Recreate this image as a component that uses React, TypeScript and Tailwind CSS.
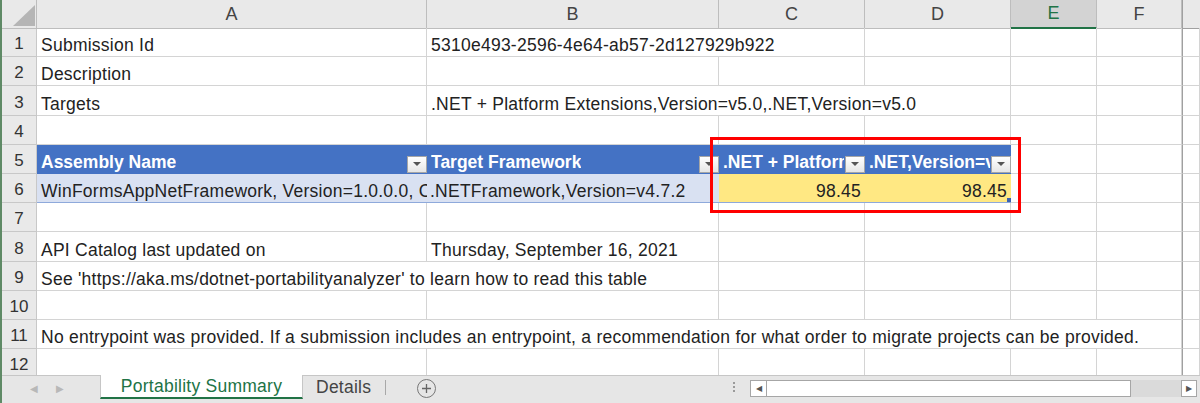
import React from 'react';

const grid = 'grid grid-cols-[35px_390px_292px_146px_146px_86px_85px_1fr]';
const line = 'border-r border-b border-[#d4d4d4]';

function RowNum({ n }: { n: number }) {
  return (
    <div className="flex items-end justify-center pb-[2px] bg-[#e9e9e9] border-r border-b border-[#c8c8c8] text-[17px] leading-[20px] text-[#333]">
      {n}
    </div>
  );
}

function Cell({ className = '', children }: { className?: string; children?: React.ReactNode }) {
  return (
    <div className={`flex items-end pb-[1px] pl-[4px] overflow-hidden whitespace-nowrap leading-[20px] tracking-[0.25px] ${line} ${className}`}>
      {children}
    </div>
  );
}

function Filter() {
  return (
    <div className="absolute right-0 bottom-0 w-[20px] h-[17px] border border-[#a6a6a6] bg-gradient-to-b from-white to-[#e6e6e6] flex items-center justify-center">
      <div className="w-0 h-0 border-l-[4px] border-r-[4px] border-t-[4px] border-l-transparent border-r-transparent border-t-[#555]" />
    </div>
  );
}

function HeadCell({ children, className = '' }: { children?: React.ReactNode; className?: string }) {
  return (
    <div className={`relative flex items-end pb-[1px] pl-[4px] pr-[21px] overflow-hidden whitespace-nowrap leading-[20px] bg-[#4472c4] text-white font-bold border-b border-[#4472c4] ${className}`}>
      <span className="min-w-0 overflow-hidden">{children}</span>
      <Filter />
    </div>
  );
}

function Empty({ n }: { n: number }) {
  return (
    <div className={`${grid} h-[29.2px]`}>
      <RowNum n={n} />
      <Cell />
      <Cell />
      <Cell />
      <Cell />
      <Cell />
      <Cell />
      <Cell className="border-l border-l-[#a0a0a0]" />
    </div>
  );
}

export default function App() {
  const letters = ['A', 'B', 'C', 'D', 'E', 'F'];
  return (
    <div className="relative w-[1200px] h-[403px] overflow-hidden bg-white border-l-2 border-[#5f8a66] text-[17.5px] text-[#222] font-['Liberation_Sans',Arial,sans-serif]">
      <div className="h-[375px] overflow-hidden">
        {/* column headers */}
        <div className={`${grid} h-[28px]`}>
          <div className="relative bg-[#e9e9e9] border-r border-b border-[#bdbdbd]">
            <svg className="absolute left-[11px] top-[5px]" width="22" height="21" viewBox="0 0 22 21">
              <polygon points="22,0 22,21 0,21" fill="#b5b5b5" />
            </svg>
          </div>
          {letters.map((l) => (
            <div
              key={l}
              className={
                l === 'E'
                  ? 'flex items-center justify-center bg-[#d3d3d3] text-[#217346] border-r border-[#bdbdbd] border-b-2 border-b-[#217346] text-[18px]'
                  : 'flex items-center justify-center bg-[#e9e9e9] text-[#444] border-r border-b border-[#bdbdbd] text-[18px]'
              }
            >
              {l}
            </div>
          ))}
          <div className="bg-[#e9e9e9] border-b border-l border-[#a0a0a0]" />
        </div>

        <div className={`${grid} h-[29.2px]`}>
          <RowNum n={1} />
          <Cell>Submission Id</Cell>
          <Cell className="col-span-2 pl-[3px]">5310e493-2596-4e64-ab57-2d127929b922</Cell>
          <Cell />
          <Cell />
          <Cell />
          <Cell className="border-l border-l-[#a0a0a0]" />
        </div>

        <div className={`${grid} h-[29.2px]`}>
          <RowNum n={2} />
          <Cell>Description</Cell>
          <Cell />
          <Cell />
          <Cell />
          <Cell />
          <Cell />
          <Cell className="border-l border-l-[#a0a0a0]" />
        </div>

        <div className={`${grid} h-[29.2px]`}>
          <RowNum n={3} />
          <Cell>Targets</Cell>
          <Cell className="col-span-3 pl-[3px]">.NET + Platform Extensions,Version=v5.0,.NET,Version=v5.0</Cell>
          <Cell />
          <Cell />
          <Cell className="border-l border-l-[#a0a0a0]" />
        </div>

        <Empty n={4} />

        {/* table header */}
        <div className={`${grid} h-[29.2px]`}>
          <RowNum n={5} />
          <HeadCell>Assembly Name</HeadCell>
          <HeadCell className="pl-[3px]">Target Framework</HeadCell>
          <HeadCell className="pl-[3px]">.NET + Platform Extensions,Version=v5.0</HeadCell>
          <HeadCell className="pl-[3px]">.NET,Version=v5.0</HeadCell>
          <Cell />
          <Cell />
          <Cell className="border-l border-l-[#a0a0a0]" />
        </div>

        {/* table row */}
        <div className={`${grid} h-[29.2px]`}>
          <RowNum n={6} />
          <div className="flex items-end pb-[1px] pl-[4px] overflow-hidden whitespace-nowrap leading-[20px] tracking-[0.25px] bg-[#d9e1f2] border-b border-[#8ea9db]">
            WinFormsAppNetFramework, Version=1.0.0.0, Culture=neutral
          </div>
          <div className="flex items-end pb-[1px] pl-[3px] overflow-hidden whitespace-nowrap leading-[20px] tracking-[0.25px] bg-[#d9e1f2] border-b border-[#8ea9db]">
            .NETFramework,Version=v4.7.2
          </div>
          <div className="flex items-end justify-end pb-[1px] pr-[4px] leading-[20px] tracking-[0.25px] bg-[#ffe883] border-b border-[#8ea9db]">
            98.45
          </div>
          <div className="relative flex items-end justify-end pb-[1px] pr-[4px] leading-[20px] tracking-[0.25px] bg-[#ffe883] border-b border-[#8ea9db]">
            98.45
            <div className="absolute right-0 bottom-0 w-[4px] h-[4px] bg-[#3b62b0]" />
          </div>
          <Cell />
          <Cell />
          <Cell className="border-l border-l-[#a0a0a0]" />
        </div>

        <Empty n={7} />

        <div className={`${grid} h-[29.2px]`}>
          <RowNum n={8} />
          <Cell>API Catalog last updated on</Cell>
          <Cell className="pl-[3px]">Thursday, September 16, 2021</Cell>
          <Cell />
          <Cell />
          <Cell />
          <Cell />
          <Cell className="border-l border-l-[#a0a0a0]" />
        </div>

        <div className={`${grid} h-[29.2px]`}>
          <RowNum n={9} />
          <Cell className="col-span-2">See 'https://aka.ms/dotnet-portabilityanalyzer' to learn how to read this table</Cell>
          <Cell />
          <Cell />
          <Cell />
          <Cell />
          <Cell className="border-l border-l-[#a0a0a0]" />
        </div>

        <Empty n={10} />

        <div className={`${grid} h-[29.2px]`}>
          <RowNum n={11} />
          <Cell className="col-span-6">
            No entrypoint was provided. If a submission includes an entrypoint, a recommendation for what order to migrate projects can be provided.
          </Cell>
          <Cell className="border-l border-l-[#a0a0a0]" />
        </div>

        <Empty n={12} />
      </div>

      {/* sheet tabs bar */}
      <div className="flex items-start h-[28px] bg-[#e6e6e6] border-t border-[#c6c6c6]">
        <div className="flex items-center gap-[18px] w-[98px] h-[24px] pl-[28px] text-[#b8b8b8] text-[10px]">
          <span>◀</span>
          <span>▶</span>
        </div>
        <div className="flex items-center justify-center w-[203px] h-[24px] -mt-px bg-white border-l border-r border-[#c6c6c6] border-b-2 border-b-[#217346] text-[#217346] text-[17.5px] tracking-[0.25px]">
          Portability Summary
        </div>
        <div className="flex items-center h-[22px] pl-[13px] pr-[14px] text-[#444] text-[17.5px] tracking-[0.25px]">Details</div>
        <div className="w-px h-[15px] mt-[4px] bg-[#a8a8a8]" />
        <div className="flex items-center justify-center w-[19px] h-[19px] mt-[3px] ml-[31px] rounded-full border border-[#777]">
          <svg width="11" height="11" viewBox="0 0 11 11">
            <path d="M5.5 1v9M1 5.5h9" stroke="#666" strokeWidth="1.3" />
          </svg>
        </div>
        <div className="flex flex-col gap-[2px] mt-[6px] ml-[297px]">
          <div className="w-[2px] h-[2px] bg-[#9a9a9a]" />
          <div className="w-[2px] h-[2px] bg-[#9a9a9a]" />
          <div className="w-[2px] h-[2px] bg-[#9a9a9a]" />
        </div>
        <div className="flex h-[17px] mt-[4px] ml-[15px] w-[447px]">
          <div className="flex items-center justify-center w-[17px] bg-white border border-[#a6a6a6] text-[8px] text-[#555]">◀</div>
          <div className="w-[364px] bg-white border-y border-r border-[#a6a6a6]" />
          <div className="flex-1 bg-[#dadada]" />
          <div className="flex items-center justify-center w-[16px] bg-white border border-[#a6a6a6] text-[8px] text-[#555]">▶</div>
        </div>
      </div>

      {/* annotation box */}
      <div className="absolute left-[708px] top-[137px] w-[311px] h-[76px] border-[3px] border-[#ff0000] pointer-events-none" />
    </div>
  );
}
